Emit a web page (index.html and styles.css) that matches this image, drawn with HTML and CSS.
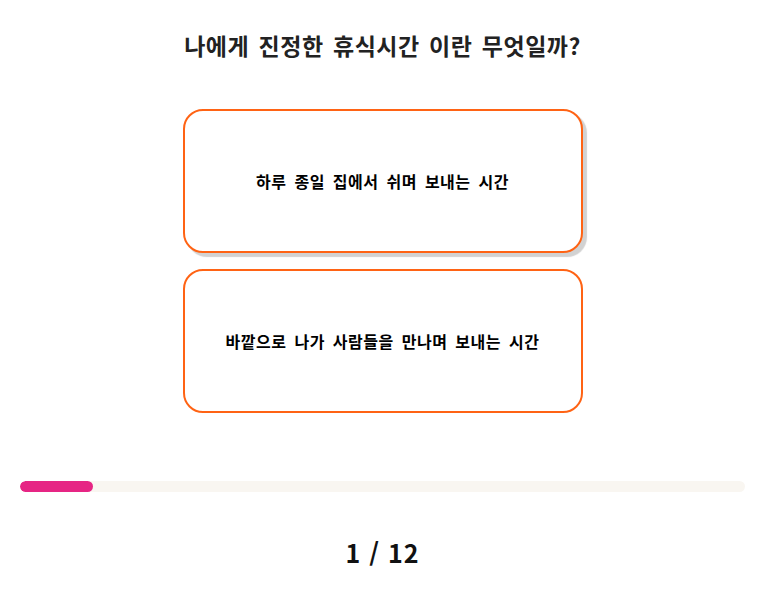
FILE: index.html
```html
<!DOCTYPE html>
<html lang="ko">
<head>
    <meta charset="UTF-8">
    <meta name="viewport" content="width=device-width, initial-scale=1.0">
    <title>휴식 테스트</title>
    <link rel="stylesheet" href="styles.css">
</head>
<body>

    <!-- Question -->
    <h1 class="question">나에게 진정한 휴식시간 이란 무엇일까?</h1>

    <!-- Answer choices -->
    <div class="choices">
        <button class="choice choice-hover">하루 종일 집에서 쉬며 보내는 시간</button>
        <button class="choice">바깥으로 나가 사람들을 만나며 보내는 시간</button>
    </div>

    <!-- Progress -->
    <div class="progress">
        <div class="progress-fill" style="width: 10%"></div>
    </div>

    <div class="counter">1 / 12</div>

</body>
</html>
```

FILE: styles.css
```css
/* Page */
body {
    font-family: "Noto Sans CJK KR", "Noto Sans", sans-serif;
    background-color: #fff;
    margin: 0;
    padding: 0 0 0 4px;
    color: #222;
}

.question {
    margin: 0;
    padding-top: 28px;
    text-align: center;
    font-size: 23px;
    font-weight: bold;
    line-height: 34px;
    letter-spacing: 0.5px;
    word-spacing: 2.5px;
    color: #222;
}

/* Choices */
.choices {
    display: flex;
    flex-direction: column;
    align-items: center;
    gap: 16px;
    margin-top: 47px;
}

.choice {
    width: 400px;
    height: 144px;
    background-color: #fff;
    border: 2px solid #ff6314;
    border-radius: 20px;
    font-family: inherit;
    font-size: 16px;
    font-weight: bold;
    letter-spacing: 0.5px;
    word-spacing: 3px;
    color: #000;
    cursor: pointer;
}

.choice-hover {
    box-shadow: 4px 4px 1px #d2d2d2;
}

/* Progress bar */
.progress {
    margin: 68px 16px 0 16px;
    height: 11px;
    background-color: #f9f6f1;
    border-radius: 6px;
    overflow: hidden;
}

.progress-fill {
    height: 100%;
    background-color: #e62584;
    border-radius: 6px;
}

.counter {
    margin-top: 42px;
    text-align: center;
    font-size: 25px;
    font-weight: bold;
    letter-spacing: 1px;
    color: #111;
}
```
